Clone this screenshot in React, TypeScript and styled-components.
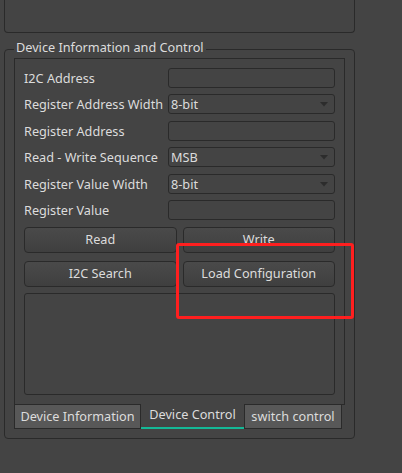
import React, { FC } from "react";
import styled, { createGlobalStyle } from "styled-components";

const GlobalStyle = createGlobalStyle`
  html, body {
    margin: 0;
    padding: 0;
    background: #444444;
  }
  body {
    font-family: "Noto Sans", "Open Sans", sans-serif;
    font-size: 12.7px;
    color: #dcdcdc;
  }
`;

const Page = styled.div`
  position: relative;
  width: 402px;
  height: 473px;
  padding-left: 4px;
  box-sizing: border-box;
  overflow: hidden;
`;

const TopGroup = styled.div`
  width: 351px;
  height: 33px;
  box-sizing: border-box;
  border: 1px solid #2a2a2a;
  border-top: none;
  border-radius: 0 0 4px 4px;
`;

const Group = styled.fieldset`
  width: 351px;
  box-sizing: border-box;
  margin: 6px 0 0;
  padding: 0 9px 9px;
  border: 1px solid #2a2a2a;
  border-radius: 4px;
  min-inline-size: 0;
`;

const Legend = styled.legend`
  padding: 0 2px 4px;
  line-height: 16px;
  color: #dcdcdc;
`;

const Pane = styled.div`
  position: relative;
  margin-top: -1px;
  border: 1px solid #2a2a2a;
  padding: 9px;
`;

const Form = styled.div`
  display: grid;
  grid-template-columns: 144px 1fr;
  grid-auto-rows: 20px;
  row-gap: 6.4px;
  align-items: center;
`;

const Label = styled.span`
  line-height: 20px;
  white-space: nowrap;
`;

const Field = styled.div`
  position: relative;
  height: 20px;
  box-sizing: border-box;
  border: 1px solid #2a2a2a;
  border-radius: 3px;
  background: #444444;
  padding-left: 2px;
  line-height: 18px;
  display: flex;
  align-items: center;
`;

const Arrow = styled.svg`
  position: absolute;
  right: 6px;
  top: 7px;
`;

const Buttons = styled.div`
  display: grid;
  grid-template-columns: 1fr 1fr;
  column-gap: 6px;
  row-gap: 8px;
  margin-top: 7px;
`;

const Button = styled.button`
  height: 26px;
  border: 1px solid #2a2a2a;
  border-radius: 4px;
  background: linear-gradient(#4a4a4a, #3f3f3f);
  color: #dcdcdc;
  font-family: inherit;
  font-size: inherit;
  padding: 0 0 2px;
`;

const Output = styled.div`
  margin-top: 6px;
  height: 102px;
  box-sizing: border-box;
  border: 1px solid #2a2a2a;
  border-radius: 3px;
`;

const TabBar = styled.div`
  display: flex;
  margin-top: -1px;
  height: 25px;
`;

const Tab = styled.div<{ $active?: boolean; $width: number }>`
  position: relative;
  width: ${(p) => p.$width}px;
  box-sizing: border-box;
  display: flex;
  align-items: center;
  justify-content: center;
  white-space: nowrap;
  background: ${(p) => (p.$active ? "#444444" : "#585858")};
  border: ${(p) => (p.$active ? "none" : "1px solid #2a2a2a")};
  border-bottom: ${(p) => (p.$active ? "2px solid #14b896" : "1px solid #2a2a2a")};
  padding-bottom: ${(p) => (p.$active ? "3px" : "0")};
`;

const Highlight = styled.div`
  position: absolute;
  left: 176px;
  top: 243px;
  width: 178px;
  height: 76px;
  box-sizing: border-box;
  border: 3px solid #ff1f1f;
  border-radius: 3px;
`;

const DropArrow: FC = () => (
  <Arrow width="8" height="5" viewBox="0 0 8 5">
    <path d="M0 0h8L4 4.5z" fill="#2c2c2c" />
  </Arrow>
);

const rows: { label: string; value?: string; combo?: boolean }[] = [
  { label: "I2C Address" },
  { label: "Register Address Width", value: "8-bit", combo: true },
  { label: "Register Address" },
  { label: "Read - Write Sequence", value: "MSB", combo: true },
  { label: "Register Value Width", value: "8-bit", combo: true },
  { label: "Register Value" },
];

const App: FC = () => (
  <>
    <GlobalStyle />
    <Page>
      <TopGroup />
      <Group>
        <Legend>Device Information and Control</Legend>
        <Pane>
          <Form>
            {rows.map((r) => (
              <React.Fragment key={r.label}>
                <Label>{r.label}</Label>
                <Field>
                  {r.value}
                  {r.combo && <DropArrow />}
                </Field>
              </React.Fragment>
            ))}
          </Form>
          <Buttons>
            <Button>Read</Button>
            <Button>Write</Button>
            <Button>I2C Search</Button>
            <Button>Load Configuration</Button>
          </Buttons>
          <Output />
        </Pane>
        <TabBar>
          <Tab $width={127}>Device Information</Tab>
          <Tab $width={103} $active>
            Device Control
          </Tab>
          <Tab $width={98}>switch control</Tab>
        </TabBar>
      </Group>
      <Highlight />
    </Page>
  </>
);

export default App;
